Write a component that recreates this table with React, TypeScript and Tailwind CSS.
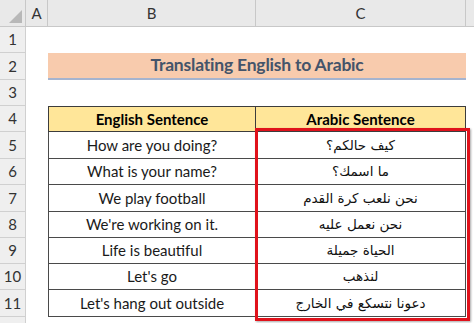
import React from "react";

const rows: { n: number; h: number }[] = [
  { n: 1, h: 26 },
  { n: 2, h: 27 },
  { n: 3, h: 26 },
  { n: 4, h: 26 },
  { n: 5, h: 27 },
  { n: 6, h: 26 },
  { n: 7, h: 27 },
  { n: 8, h: 26 },
  { n: 9, h: 26 },
  { n: 10, h: 26 },
  { n: 11, h: 27 },
  { n: 12, h: 26 },
];

const data: [string, string][] = [
  ["How are you doing?", "كيف حالكم؟"],
  ["What is your name?", "ما اسمك؟"],
  ["We play football", "نحن نلعب كرة القدم"],
  ["We're working on it.", "نحن نعمل عليه"],
  ["Life is beautiful", "الحياة جميلة"],
  ["Let's go", "لنذهب"],
  ["Let's hang out outside", "دعونا نتسكع في الخارج"],
];

const font = { fontFamily: "Lato, 'Open Sans', sans-serif" };

function RowCells({ n }: { n: number }) {
  if (n === 2) {
    return (
      <div className="flex-1 flex">
        <div className="w-[22px]" />
        <div className="w-[418px] bg-[#f8cbad] border-b-2 border-[#a6b4cf] flex items-center justify-center">
          <span className="text-[17.5px] font-bold text-[#44546a] tracking-[-0.2px]">
            Translating English to Arabic
          </span>
        </div>
      </div>
    );
  }
  if (n === 4) {
    return (
      <div className="flex-1 flex">
        <div className="w-[22px]" />
        <div className="w-[208px] bg-[#ffe699] border border-[#3c3c3c] flex items-center justify-center text-[15px] font-bold text-black">
          English Sentence
        </div>
        <div className="w-[210px] bg-[#ffe699] border border-l-0 border-[#3c3c3c] flex items-center justify-center text-[15px] font-bold text-black">
          Arabic Sentence
        </div>
      </div>
    );
  }
  if (n >= 5 && n <= 11) {
    const [en, ar] = data[n - 5];
    return (
      <div className="flex-1 flex">
        <div className="w-[22px]" />
        <div className="w-[208px] bg-white border-x border-b border-[#4a4a4a] flex items-center justify-center text-[15px] text-[#1a1a1a]">
          {en}
        </div>
        <div
          dir="rtl"
          className="w-[210px] bg-white border-r border-b border-[#4a4a4a] flex items-center justify-center text-[13.5px] text-[#111]"
          style={{ fontFamily: "'DejaVu Sans', 'Noto Sans', sans-serif" }}
        >
          {ar}
        </div>
      </div>
    );
  }
  return <div className="flex-1" />;
}

export default function App() {
  return (
    <div className="relative w-[474px] h-[323px] overflow-hidden bg-white" style={font}>
      {/* column headers */}
      <div className="flex h-[27px] bg-[#e9e9e9] border-b border-[#c8c8c8] text-[15px] text-[#333]">
        <div className="w-[26px] border-r border-[#c8c8c8] relative">
          <div className="absolute right-[3px] bottom-[3px] w-0 h-0 border-l-[13px] border-l-transparent border-b-[13px] border-b-[#b8b8b8]" />
        </div>
        <div className="w-[22px] border-r border-[#c8c8c8] flex items-center justify-center">A</div>
        <div className="w-[208px] border-r border-[#c8c8c8] flex items-center justify-center">B</div>
        <div className="w-[210px] border-r border-[#c8c8c8] flex items-center justify-center">C</div>
        <div className="flex-1" />
      </div>
      {rows.map((r) => (
        <div key={r.n} className="flex" style={{ height: r.h }}>
          <div className="w-[26px] bg-[#efefef] border-r border-b border-[#d0d0d0] flex items-center justify-center text-[15px] text-[#333]">
            {r.n <= 11 ? r.n : ""}
          </div>
          <RowCells n={r.n} />
        </div>
      ))}
      {/* highlight box */}
      <div className="absolute left-[255px] top-[128px] w-[215px] h-[193px] border-[3px] border-[#e0121b] shadow-[1px_1px_2px_rgba(0,0,0,0.35)]" />
    </div>
  );
}
